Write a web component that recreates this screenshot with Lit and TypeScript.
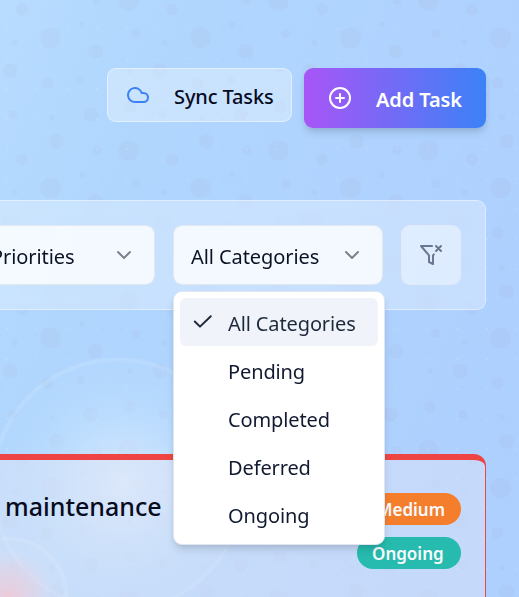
import { LitElement, html, svg, css } from "lit";
import { customElement, state } from "lit/decorators.js";

// One bubble tile: [cx, cy, r] on a 100x100 grid.
const BUBBLES = [
  [11, 11, 7], [59, 36, 7], [16, 33, 3], [79, 64, 3], [34, 87, 3], [90, 11, 3],
  [12, 82, 4], [40, 17, 4], [57, 66, 4], [63, 5, 5], [86, 87, 5], [32, 58, 5],
  [89, 45, 5], [80, 27, 2], [60, 89, 2], [35, 39, 2], [12, 58, 2],
];

const CATEGORIES = ["All Categories", "Pending", "Completed", "Deferred", "Ongoing"];

@customElement("task-backdrop")
export class TaskBackdrop extends LitElement {
  static styles = css`
    :host { display: block; }
    svg { display: block; width: 519px; height: 597px; }
  `;
  render() {
    return html`<svg viewBox="0 0 519 597" aria-hidden="true">
      <defs>
        <linearGradient id="sky" x1="0" y1="0" x2="1" y2="0.5">
          <stop offset="0" stop-color="#b8dcff" />
          <stop offset=".3" stop-color="#b0d6fe" />
          <stop offset="1" stop-color="#aed0fe" />
        </linearGradient>
        <pattern id="bubbles" width="100" height="100" patternUnits="userSpaceOnUse"
          patternTransform="translate(-38 -16) scale(1.5)">
          ${BUBBLES.map(([x, y, r]) => svg`<circle cx=${x} cy=${y} r=${r} fill="#9c92ac" fill-opacity=".07" />`)}
        </pattern>
        <pattern id="dots" width="30" height="30" patternUnits="userSpaceOnUse" x="-8" y="14">
          <circle cx="15" cy="15" r="1" fill="#fff" fill-opacity=".13" />
        </pattern>
        <radialGradient id="glow" cx=".52" cy=".49" fx=".52" fy=".49">
          <stop offset="0" stop-color="#f1f5ff" stop-opacity=".55" />
          <stop offset=".35" stop-color="#e2f1ff" stop-opacity=".4" />
          <stop offset=".7" stop-color="#d0ecff" stop-opacity=".2" />
          <stop offset="1" stop-color="#d0ecff" stop-opacity=".06" />
        </radialGradient>
        <radialGradient id="rose">
          <stop offset="0" stop-color="#ffb0b8" stop-opacity=".8" />
          <stop offset=".5" stop-color="#ffc0c8" stop-opacity=".38" />
          <stop offset=".85" stop-color="#dfeaff" stop-opacity=".06" />
          <stop offset="1" stop-color="#e8f0ff" stop-opacity=".08" />
        </radialGradient>
        <filter id="soft"><feGaussianBlur stdDeviation="1.2" /></filter>
      </defs>
      <rect width="519" height="597" fill="url(#sky)" />
      <rect width="519" height="597" fill="url(#bubbles)" />
      <rect width="519" height="597" fill="url(#dots)" />
      <circle cx="118" cy="485" r="127" fill="url(#glow)" />
      <circle cx="118" cy="485" r="125.500" fill="none" stroke="#fff" stroke-opacity=".14" stroke-width="3" filter="url(#soft)" />
      <circle cx="8" cy="597" r="60" fill="url(#rose)" />
      <circle cx="8" cy="597" r="58.500" fill="none" stroke="#fff" stroke-opacity=".15" stroke-width="3" filter="url(#soft)" />
    </svg>`;
  }
}

@customElement("app-root")
export class AppRoot extends LitElement {
  @state() private selected = "All Categories";

  static styles = css`
    :host {
      display: block; position: relative; width: 519px; height: 597px; overflow: hidden;
      font-family: "Noto Sans", "Open Sans", sans-serif; font-size: 20px; color: #0b1224;
    }
    * { box-sizing: border-box; }
    svg { display: block; flex: none; fill: none; stroke: currentColor; stroke-linecap: round; stroke-linejoin: round; }
    task-backdrop { position: absolute; left: 0; top: 0; }
    .page { position: relative; width: 519px; height: 597px; padding: 68px 33px 0 0; display: flex; flex-direction: column; align-items: flex-end; overflow: hidden; }
    .actions { flex: none; display: flex; gap: 12px; align-items: flex-start; height: 132px; }
    .btn { display: flex; align-items: center; border-radius: 9px; white-space: nowrap; }
    .sync { width: 185px; height: 54px; padding-left: 18px; gap: 24px; border: 1px solid rgba(255,255,255,.45); background: rgba(255,255,255,.32); font-weight: 550; color: #060b1d; }
    .sync svg { color: #3b82f6; }
    .sync span { letter-spacing: -.12px; margin-top: 2px; }
    .add { width: 182px; height: 60px; padding-left: 24px; gap: 24px; background: linear-gradient(90deg, #a855f7, #3b82f6); color: #fff; font-weight: 600; box-shadow: 0 6px 9px -1px rgba(0,0,0,.1), 0 3px 6px -2px rgba(0,0,0,.1); }
    .add span { letter-spacing: -.1px; margin-top: 2px; }
    .filters { flex: none; width: 640px; height: 110px; padding: 24px; display: flex; justify-content: flex-end; gap: 18px; border: 1px solid rgba(255,255,255,.42); border-radius: 9px; background: rgba(255,255,255,.3); backdrop-filter: blur(6px); }
    .select { width: 210px; height: 60px; flex: none; padding: 0 18px 0 17px; display: flex; align-items: center; justify-content: space-between; border: 1px solid #e2e8f0; border-radius: 9px; background: rgba(255,255,255,.8); background-clip: padding-box; }
    .select span { letter-spacing: -.08px; white-space: nowrap; margin-top: 2px; }
    .select svg { color: #7b818f; }
    .clear { width: 60px; height: 60px; display: flex; align-items: center; justify-content: center; border: 1px solid rgba(226,232,240,.6); border-radius: 9px; background: rgba(255,255,255,.42); color: #6b7690; }
    .card { flex: none; width: 640px; height: 200px; margin-top: 144px; padding: 32px 24px 0 0; display: flex; justify-content: flex-end; gap: 12px; border: 0 solid #ef4444; border-top-width: 6px; border-right-width: 1px; border-radius: 12px; background: rgba(232,232,244,.4); }
    .title { flex: 1; padding-left: 159px; font-size: 25px; font-weight: 550; line-height: 28px; color: #060b1d; letter-spacing: 0; }
    .badges { display: flex; flex-direction: column; gap: 12px; align-items: flex-end; padding-top: 1px; }
    .badge { flex: none; height: 32px; padding: 0 16px 0 15px; border-radius: 16px; display: flex; align-items: center; color: #f8fafc; font-size: 17px; font-weight: 650; }
    .medium { background: #f57e2c; }
    .ongoing { background: #26bbae; width: 104px; }
    .menu { position: absolute; left: 173px; top: 291px; width: 212px; height: 254px; padding: 6px; border: 1px solid #dfe6f0; border-radius: 9px; background: #fff; box-shadow: 0 6px 9px -1px rgba(0,0,0,.1), 0 3px 6px -2px rgba(0,0,0,.1); }
    .item { height: 48px; padding-left: 12px; display: flex; align-items: center; border-radius: 6px; color: #111a30; }
    .item.on { background: #f0f4fa; color: #1e293b; }
    .tick { width: 36px; height: 24px; }
    .item span { letter-spacing: -.12px; margin-top: 2px; }
  `;

  private chevron() {
    return html`<svg width="24" height="24" viewBox="0 0 24 24" stroke-width="2"><path d="m6 9 6 6 6-6" /></svg>`;
  }

  render() {
    return html`
      <task-backdrop></task-backdrop>
      <div class="page">
        <div class="actions">
          <div class="btn sync">
            <svg width="24" height="24" viewBox="0 0 24 24" stroke-width="2"><path d="M17.500 19H9a7 7 0 1 1 6.710-9h1.790a4.500 4.500 0 1 1 0 9Z" /></svg>
            <span>Sync Tasks</span>
          </div>
          <div class="btn add">
            <svg width="24" height="24" viewBox="0 0 24 24" stroke-width="2"><circle cx="12" cy="12" r="10" /><path d="M8 12h8M12 8v8" /></svg>
            <span>Add Task</span>
          </div>
        </div>
        <div class="filters">
          <div class="select"><span>All Priorities</span>${this.chevron()}</div>
          <div class="select"><span>${this.selected}</span>${this.chevron()}</div>
          <div class="clear">
            <svg width="24" height="24" viewBox="0 0 24 24" stroke-width="2"><path d="M13.013 3H2l8 9.460V19l4 2v-8.540l.900-1.055" /><path d="m22 3-5 5M17 3l5 5" /></svg>
          </div>
        </div>
        <div class="card">
          <div class="title">maintenance</div>
          <div class="badges">
            <div class="badge medium">Medium</div>
            <div class="badge ongoing">Ongoing</div>
          </div>
        </div>
      </div>
      <div class="menu">
        ${CATEGORIES.map((c) => html`<div class="item ${c === this.selected ? "on" : ""}" @click=${() => (this.selected = c)}>
          <div class="tick">${c === this.selected
            ? html`<svg width="24" height="24" viewBox="0 0 24 24" stroke-width="2"><path d="M18.800 6.300 8 16.600 2.800 11.500" /></svg>` : ""}</div>
          <span>${c}</span>
        </div>`)}
      </div>
    `;
  }
}
